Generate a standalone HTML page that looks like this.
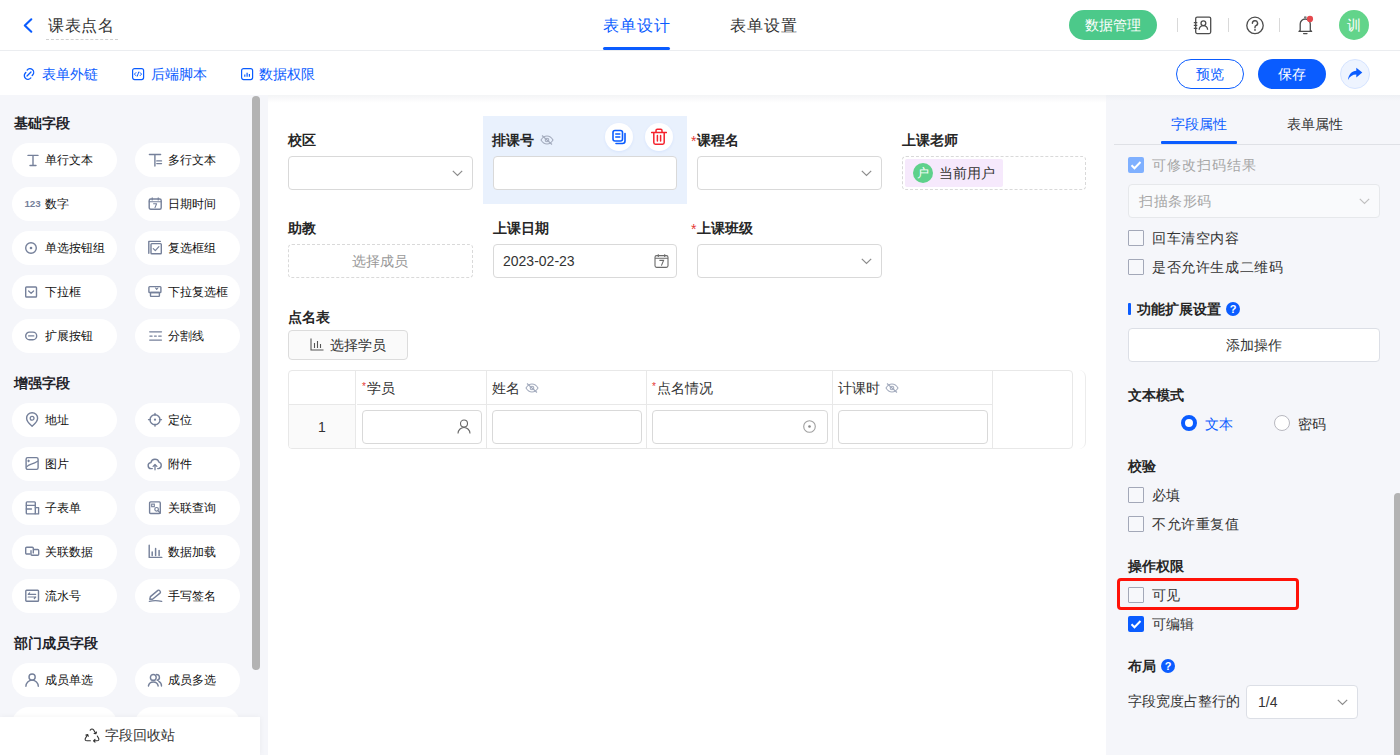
<!DOCTYPE html>
<html><head><meta charset="utf-8">
<style>
*{box-sizing:border-box;margin:0;padding:0}
html,body{width:1400px;height:755px;overflow:hidden;background:#fff;font-family:"Liberation Sans",sans-serif;color:#333;font-size:14px}
.a{position:absolute}
.hdr{left:0;top:0;width:1400px;height:51px;background:#fff;border-bottom:1px solid #ebedf0}
.tb{left:0;top:51px;width:1400px;height:44px;background:#fff}
.left{left:0;top:95px;width:268px;height:660px;background:#f5f6fa}
.main{left:268px;top:95px;width:838px;height:660px;background:#fff}
.right{left:1106px;top:95px;width:294px;height:660px;background:#f5f6fa}
.t{white-space:nowrap;line-height:1}
.sec{font-weight:bold;font-size:14px;color:#1f2329}
.pill{width:105px;height:34px;border-radius:17px;background:#fff}
.pill .ic{position:absolute;left:13px;top:10px;width:14px;height:14px}
.pill .tx{position:absolute;left:33px;top:11px;font-size:12px;color:#111;line-height:1;white-space:nowrap}
.lbl{font-weight:bold;font-size:14px;color:#262626}
.inp{border:1px solid #d9d9d9;border-radius:4px;background:#fff;height:34px}
.req{color:#e53935}
.cb{width:16px;height:16px;border:1px solid #a3a8b8;border-radius:1px;background:#f7f8fb}
.cbt{font-size:14px;color:#333}
</style></head><body>
<!-- header -->
<div class="a hdr"></div>
<svg class="a" style="left:22px;top:17px" width="12" height="17" viewBox="0 0 12 17"><path d="M9.3 2.3 L2.8 8.5 L9.3 14.7" fill="none" stroke="#0a5cff" stroke-width="2.1" stroke-linecap="round" stroke-linejoin="round"/></svg>
<div class="a t" style="left:48px;top:18px;font-size:16px;color:#333;letter-spacing:0.5px">课表点名</div>
<div class="a" style="left:46px;top:39px;width:72px;border-top:1px dashed #d0d0d0"></div>
<div class="a t" style="left:603px;top:18px;font-size:16px;color:#0a5cff;letter-spacing:1px">表单设计</div>
<div class="a" style="left:603px;top:47px;width:67px;height:3px;border-radius:2px;background:#0a5cff"></div>
<div class="a t" style="left:730px;top:18px;font-size:16px;color:#333;letter-spacing:1px">表单设置</div>
<div class="a" style="left:1069px;top:10px;width:88px;height:30px;border-radius:15px;background:#4cc98a"></div>
<div class="a t" style="left:1085px;top:18px;font-size:14px;color:#fff">数据管理</div>
<div class="a" style="left:1177px;top:18px;width:1px;height:14px;background:#d9d9d9"></div>
<div class="a" style="left:1228px;top:18px;width:1px;height:14px;background:#d9d9d9"></div>
<div class="a" style="left:1279px;top:18px;width:1px;height:14px;background:#d9d9d9"></div>
<div class="a" style="left:1339px;top:10px;width:30px;height:30px;border-radius:15px;background:#62d48a"></div>
<div class="a t" style="left:1347px;top:18px;font-size:14px;color:#fff">训</div>
<svg class="a" style="left:1190px;top:12px" width="26" height="26" viewBox="0 0 26 26"><rect x="5.7" y="5.1" width="15" height="16.5" rx="1.5" stroke="#4d4d4d" stroke-width="1.3" fill="none"/><path d="M3.8 10.6h3.5M3.8 13.4h3.5M3.8 16.3h3.5" stroke="#4d4d4d" stroke-width="1.2"/><circle cx="13.4" cy="11.2" r="2.4" stroke="#4d4d4d" stroke-width="1.3" fill="none"/><path d="M9.2 17.8a4.2 4.2 0 0 1 8.4 0" stroke="#4d4d4d" stroke-width="1.3" fill="none"/></svg>
<svg class="a" style="left:1243px;top:13px" width="24" height="24" viewBox="0 0 24 24"><circle cx="12" cy="12.4" r="8.2" stroke="#4d4d4d" stroke-width="1.3" fill="none"/><path d="M9.4 10.3a2.6 2.6 0 1 1 3.6 2.4c-.7.3-1 .8-1 1.5v.6" stroke="#4d4d4d" stroke-width="1.4" fill="none" stroke-linecap="round"/><circle cx="12" cy="16.9" r="0.9" fill="#4d4d4d"/></svg>
<svg class="a" style="left:1293px;top:12px" width="24" height="24" viewBox="0 0 24 24"><path d="M6 19.4h12.6M7.2 19.4V12a5 5 0 0 1 5-5h0.1a5 5 0 0 1 5 5v7.4M6 19.4l1.2-1.2M18.6 19.4l-1.2-1.2M10.6 21.6h3.4M11.6 5.2h1.4" stroke="#4d4d4d" stroke-width="1.3" fill="none" stroke-linecap="round"/><circle cx="17" cy="6.9" r="3.1" fill="#e5484d"/></svg>


<!-- toolbar -->
<div class="a tb"></div>
<div class="a t" style="left:42px;top:67px;font-size:14px;color:#0a5cff">表单外链</div>
<div class="a t" style="left:151px;top:67px;font-size:14px;color:#0a5cff">后端脚本</div>
<div class="a t" style="left:259px;top:67px;font-size:14px;color:#0a5cff">数据权限</div>
<div class="a" style="left:1176px;top:59px;width:68px;height:30px;border-radius:15px;border:1px solid #0a5cff;background:#fff"></div>
<div class="a t" style="left:1196px;top:67px;font-size:14px;color:#0a5cff">预览</div>
<div class="a" style="left:1258px;top:59px;width:68px;height:30px;border-radius:15px;background:#0a5cff"></div>
<div class="a t" style="left:1278px;top:67px;font-size:14px;color:#fff">保存</div>
<div class="a" style="left:1340px;top:59px;width:30px;height:30px;border-radius:15px;border:1px solid #d6e4ff;background:#eef4ff"></div>


<svg class="a" style="left:21.5px;top:67px" width="14" height="14" viewBox="0.6 0.6 12.8 12.8"><path d="M5.3 3.4a3.3 3.3 0 0 1 5.2 4.3l-0.6 0.7M8.7 10.6a3.3 3.3 0 0 1-5.2-4.3l0.6-0.7M5.2 8.8l3.6-3.6" stroke="#0a5cff" stroke-width="1.2" fill="none" stroke-linecap="round"/></svg>
<svg class="a" style="left:131px;top:67px" width="14" height="14" viewBox="0 0 14 14"><rect x="1.6" y="1.6" width="11" height="11" rx="2" stroke="#0a5cff" stroke-width="1.2" fill="none"/><path d="M5.2 5.3L3.4 7.1l1.8 1.8M8.8 5.3l1.8 1.8-1.8 1.8M7.9 4.6L6.1 9.6" stroke="#0a5cff" stroke-width="1" fill="none"/></svg>
<svg class="a" style="left:240px;top:67px" width="14" height="14" viewBox="0 0 14 14"><rect x="1.6" y="1.6" width="11" height="11" rx="2" stroke="#0a5cff" stroke-width="1.2" fill="none"/><path d="M4.8 7.5v2.3M7.1 5.8v4M9.4 7v2.8" stroke="#0a5cff" stroke-width="1.2" fill="none"/></svg>
<svg class="a" style="left:1338px;top:57px" width="34" height="34" viewBox="0 0 34 34"><path d="M10 23C10.5 17.5 14 14 18.3 13.8V10.8L24.3 15.6L18.3 20.5V17.6C14.5 17.6 11.8 19.5 10 23Z" fill="#0a5cff"/></svg>
<!-- panels -->
<div class="a left"></div>
<div class="a t sec" style="left:14px;top:116px">基础字段</div>
<div class="a pill" style="left:12px;top:143px"><svg class="ic" viewBox="0 0 14 14" style="overflow:visible"><path d="M3 2.4h10M8 2.4v10.1M5 12.5h6" stroke="#75809a" stroke-width="1.4" fill="none" stroke-linecap="round" stroke-linejoin="round"/></svg><div class="tx">单行文本</div></div>
<div class="a pill" style="left:135px;top:143px"><svg class="ic" viewBox="0 0 14 14" style="overflow:visible"><path d="M1.4 1.5h11.2M6.9 1.5v11.5M8.8 7.9h4.7M8.8 10.6h4.7" stroke="#75809a" stroke-width="1.4" fill="none" stroke-linecap="round" stroke-linejoin="round"/></svg><div class="tx">多行文本</div></div>
<div class="a pill" style="left:12px;top:187px"><svg class="ic" viewBox="0 0 14 14" style="overflow:visible"><text x="-0.6" y="9.9" font-size="9.8" font-weight="bold" fill="#75809a" style="font-family:'Liberation Sans',sans-serif">123</text></svg><div class="tx">数字</div></div>
<div class="a pill" style="left:135px;top:187px"><svg class="ic" viewBox="0 0 14 14" style="overflow:visible"><rect x="1.2" y="2" width="12" height="10.3" rx="1.5" stroke="#75809a" stroke-width="1.4" fill="none"/><path d="M1.2 4.8h12M4.2 0.9v2M10.2 0.9v2M5.6 6.8h3l-1.6 3.8" stroke="#75809a" stroke-width="1.1" fill="none" stroke-linecap="round" stroke-linejoin="round"/></svg><div class="tx">日期时间</div></div>
<div class="a pill" style="left:12px;top:231px"><svg class="ic" viewBox="0 0 14 14" style="overflow:visible"><circle cx="6" cy="7" r="5.3" stroke="#75809a" stroke-width="1.4" fill="none"/><circle cx="6" cy="7" r="1.3" fill="#75809a"/></svg><div class="tx">单选按钮组</div></div>
<div class="a pill" style="left:135px;top:231px"><svg class="ic" viewBox="0 0 14 14" style="overflow:visible"><path d="M0.8 12.2V0.4h11.5" stroke="#75809a" stroke-width="1.4" fill="none" stroke-linecap="round" stroke-linejoin="round"/><rect x="3" y="2.6" width="10.3" height="10.1" rx="0.8" stroke="#75809a" stroke-width="1.4" fill="none"/><path d="M5.3 7.7l2 2 3.6-4" stroke="#75809a" stroke-width="1.2" fill="none" stroke-linecap="round" stroke-linejoin="round"/></svg><div class="tx">复选框组</div></div>
<div class="a pill" style="left:12px;top:275px"><svg class="ic" viewBox="0 0 14 14" style="overflow:visible"><rect x="0.7" y="2" width="10.8" height="10" rx="0.8" stroke="#75809a" stroke-width="1.4" fill="none"/><path d="M3.6 6l2.5 2.3L8.6 6" stroke="#75809a" stroke-width="1.2" fill="none" stroke-linecap="round" stroke-linejoin="round"/></svg><div class="tx">下拉框</div></div>
<div class="a pill" style="left:135px;top:275px"><svg class="ic" viewBox="0 0 14 14" style="overflow:visible"><rect x="0.9" y="1.6" width="12" height="5.9" rx="0.8" stroke="#75809a" stroke-width="1.4" fill="none"/><rect x="2.5" y="7.5" width="8.9" height="3.9" rx="0.6" stroke="#75809a" stroke-width="1.4" fill="none"/><path d="M7.5 3l1.2 1.3L9.9 3" stroke="#75809a" stroke-width="1.1" fill="none" stroke-linecap="round" stroke-linejoin="round"/></svg><div class="tx">下拉复选框</div></div>
<div class="a pill" style="left:12px;top:319px"><svg class="ic" viewBox="0 0 14 14" style="overflow:visible"><rect x="0.7" y="3.1" width="11" height="7.6" rx="3.8" stroke="#75809a" stroke-width="1.4" fill="none"/><path d="M3.6 6.9h5.2" stroke="#75809a" stroke-width="1.3" fill="none" stroke-linecap="round" stroke-linejoin="round"/></svg><div class="tx">扩展按钮</div></div>
<div class="a pill" style="left:135px;top:319px"><svg class="ic" viewBox="0 0 14 14" style="overflow:visible"><path d="M1.7 2.8h11.8M1.7 11.1h11.8" stroke="#75809a" stroke-width="1.3" fill="none" stroke-linecap="round" stroke-linejoin="round"/><path d="M1.9 7.1h2.2M6.5 7.1h1.8M10.7 7.1h2.5" stroke="#75809a" stroke-width="1.3" fill="none" stroke-linecap="round" stroke-linejoin="round"/></svg><div class="tx">分割线</div></div>
<div class="a t sec" style="left:14px;top:376px">增强字段</div>
<div class="a pill" style="left:12px;top:403px"><svg class="ic" viewBox="0 0 14 14" style="overflow:visible"><path d="M7.1 13.2S12.6 8.6 12.6 5.2A5.5 5.5 0 0 0 1.6 5.2C1.6 8.6 7.1 13.2 7.1 13.2z" stroke="#75809a" stroke-width="1.4" fill="none" stroke-linecap="round" stroke-linejoin="round"/><circle cx="7.1" cy="5.3" r="1.9" stroke="#75809a" stroke-width="1.3" fill="none"/></svg><div class="tx">地址</div></div>
<div class="a pill" style="left:135px;top:403px"><svg class="ic" viewBox="0 0 14 14" style="overflow:visible"><circle cx="7" cy="6.7" r="5" stroke="#75809a" stroke-width="1.4" fill="none"/><circle cx="7" cy="6.7" r="1.1" fill="#75809a"/><path d="M7 0.3v2M7 11.2v2M0.5 6.7h2M11.5 6.7h2" stroke="#75809a" stroke-width="1.3" fill="none" stroke-linecap="round" stroke-linejoin="round"/></svg><div class="tx">定位</div></div>
<div class="a pill" style="left:12px;top:447px"><svg class="ic" viewBox="0 0 14 14" style="overflow:visible"><rect x="1.1" y="0.6" width="12" height="11.8" rx="1.6" stroke="#75809a" stroke-width="1.4" fill="none"/><path d="M1.6 10C4 6.5 7 8 12.6 4.2M3.6 3.1v1.6M2.8 3.9h1.6" stroke="#75809a" stroke-width="1.1" fill="none" stroke-linecap="round" stroke-linejoin="round"/></svg><div class="tx">图片</div></div>
<div class="a pill" style="left:135px;top:447px"><svg class="ic" viewBox="0 0 14 14" style="overflow:visible"><path d="M4.3 11.6H3.4A3 3 0 0 1 2.9 5.6 4.2 4.2 0 0 1 11 5.2a3.3 3.3 0 0 1-0.6 6.4H9.7" stroke="#75809a" stroke-width="1.4" fill="none" stroke-linecap="round" stroke-linejoin="round"/><path d="M7 12.8V7.6M5.1 9.4L7 7.5l1.9 1.9" stroke="#75809a" stroke-width="1.3" fill="none" stroke-linecap="round" stroke-linejoin="round"/></svg><div class="tx">附件</div></div>
<div class="a pill" style="left:12px;top:491px"><svg class="ic" viewBox="0 0 14 14" style="overflow:visible"><rect x="1.3" y="0.9" width="9" height="12" rx="0.8" stroke="#75809a" stroke-width="1.4" fill="none"/><path d="M1.3 4.3h9M1.3 8h5.2M10.3 6.6h3.3v6.3h-3.3" stroke="#75809a" stroke-width="1.3" fill="none" stroke-linecap="round" stroke-linejoin="round"/></svg><div class="tx">子表单</div></div>
<div class="a pill" style="left:135px;top:491px"><svg class="ic" viewBox="0 0 14 14" style="overflow:visible"><rect x="1.6" y="0.9" width="10.7" height="11.6" rx="1" stroke="#75809a" stroke-width="1.4" fill="none"/><rect x="3.7" y="3.1" width="2.6" height="2.6" stroke="#75809a" stroke-width="1.1" fill="none"/><circle cx="8.6" cy="8.3" r="1.8" stroke="#75809a" stroke-width="1.2" fill="none"/><path d="M9.9 9.6l2.4 2.4" stroke="#75809a" stroke-width="1.3" fill="none" stroke-linecap="round" stroke-linejoin="round"/></svg><div class="tx">关联查询</div></div>
<div class="a pill" style="left:12px;top:535px"><svg class="ic" viewBox="0 0 14 14" style="overflow:visible"><path d="M5 9H1.7a1 1 0 0 1-1-1V3.3a1 1 0 0 1 1-1h5.6a1 1 0 0 1 1 1v4.6" stroke="#75809a" stroke-width="1.4" fill="none" stroke-linecap="round" stroke-linejoin="round"/><path d="M9 4.5h3.7a1 1 0 0 1 1 1v3.8a1 1 0 0 1-1 1H7a1 1 0 0 1-1-1V5.6" stroke="#75809a" stroke-width="1.4" fill="none" stroke-linecap="round" stroke-linejoin="round"/></svg><div class="tx">关联数据</div></div>
<div class="a pill" style="left:135px;top:535px"><svg class="ic" viewBox="0 0 14 14" style="overflow:visible"><path d="M1.2 0.3v12.1h12.6" stroke="#75809a" stroke-width="1.4" fill="none" stroke-linecap="round" stroke-linejoin="round"/><path d="M4.2 7v3.6M7.6 3.5v7.1M11.1 5.5v5.1" stroke="#75809a" stroke-width="1.5" fill="none" stroke-linecap="round" stroke-linejoin="round"/></svg><div class="tx">数据加载</div></div>
<div class="a pill" style="left:12px;top:579px"><svg class="ic" viewBox="0 0 14 14" style="overflow:visible"><rect x="0.8" y="1.3" width="12.7" height="10.9" rx="0.8" stroke="#75809a" stroke-width="1.4" fill="none"/><path d="M3.2 5.3h7.5M3.2 8h7.5M4.6 3.8L3.2 5.3M9.3 9.5L10.7 8" stroke="#75809a" stroke-width="1.2" fill="none" stroke-linecap="round" stroke-linejoin="round"/></svg><div class="tx">流水号</div></div>
<div class="a pill" style="left:135px;top:579px"><svg class="ic" viewBox="0 0 14 14" style="overflow:visible"><path d="M1.8 10.2l0.6-2.6 7.5-6.2a1.2 1.2 0 0 1 1.7 0.2l0.6 0.8a1.2 1.2 0 0 1-0.2 1.7L4.5 10.3z" stroke="#75809a" stroke-width="1.4" fill="none" stroke-linecap="round" stroke-linejoin="round"/><path d="M1.3 12.4c4-1.1 8-1.1 12.4 0" stroke="#75809a" stroke-width="1.3" fill="none" stroke-linecap="round" stroke-linejoin="round"/></svg><div class="tx">手写签名</div></div>
<div class="a t sec" style="left:14px;top:636px">部门成员字段</div>
<div class="a pill" style="left:12px;top:663px"><svg class="ic" viewBox="0 0 14 14" style="overflow:visible"><circle cx="7.1" cy="4.1" r="3.1" stroke="#75809a" stroke-width="1.4" fill="none"/><path d="M0.9 13.3a6.2 6.2 0 0 1 12.4 0" stroke="#75809a" stroke-width="1.4" fill="none" stroke-linecap="round" stroke-linejoin="round"/></svg><div class="tx">成员单选</div></div>
<div class="a pill" style="left:135px;top:663px"><svg class="ic" viewBox="0 0 14 14" style="overflow:visible"><circle cx="5.3" cy="4.4" r="2.9" stroke="#75809a" stroke-width="1.4" fill="none"/><path d="M0.4 13a5 5 0 0 1 9.8 0M8.5 1.5a2.9 2.9 0 0 1 0.8 5.7M10.8 8.3a5 5 0 0 1 2.7 4.7" stroke="#75809a" stroke-width="1.4" fill="none" stroke-linecap="round" stroke-linejoin="round"/></svg><div class="tx">成员多选</div></div>
<div class="a pill" style="left:12px;top:707px"></div>
<div class="a pill" style="left:135px;top:707px"></div>
<div class="a" style="left:252px;top:96px;width:8px;height:574px;border-radius:4px;background:#b3b3b3"></div>
<div class="a" style="left:0;top:717px;width:260px;height:38px;background:#fff;box-shadow:0 0 6px rgba(0,0,0,0.05)"></div>
<svg class="a" style="left:84px;top:727px" width="16" height="16" viewBox="0 0 16 16"><path d="M6.2 3.2Q8 0.9 9.8 3.2L11.8 6.6M10.1 6.5L11.9 6.8L12.5 5M13.3 9L14.7 11.5Q15.4 13.8 12.9 13.8H9.6M11 12.4L9.5 13.8L11 15.2M6.4 13.8H3.1Q0.6 13.8 1.3 11.5L3.6 7.6M1.9 8.1L3.7 7.5L4.3 9.3" stroke="#333" stroke-width="1.1" fill="none" stroke-linecap="round" stroke-linejoin="round"/></svg>
<div class="a t" style="left:105px;top:728px;font-size:14px;color:#333">字段回收站</div>

<div class="a main"></div>

<div class="a" style="left:268px;top:95px;width:838px;height:8px;background:linear-gradient(#f3f4f6,#fff)"></div>
<!-- row 1 -->
<div class="a t lbl" style="left:288px;top:133px">校区</div>
<div class="a inp" style="left:288px;top:156px;width:185px"></div>
<svg class="a" style="left:452px;top:170px" width="11" height="7" viewBox="0 0 11 7"><path d="M0.8 0.8l4.7 4.7 4.7-4.7" stroke="#8c8c8c" stroke-width="1.2" fill="none"/></svg>
<div class="a" style="left:483px;top:116px;width:204px;height:88px;background:#e9f1fd"></div>
<div class="a t lbl" style="left:492px;top:133px">排课号</div>
<svg class="a" style="left:540px;top:135px" width="14" height="10" viewBox="0 0 14 10"><path d="M1 5C2.8 2 4.8 1 7 1s4.2 1 6 4c-1.8 3-3.8 4-6 4S2.8 8 1 5z" stroke="#a3abbd" stroke-width="1.1" fill="none"/><circle cx="7" cy="5" r="1.8" stroke="#a3abbd" stroke-width="1.1" fill="none"/><path d="M2 0.5l10 9" stroke="#a3abbd" stroke-width="1.1"/></svg>
<div class="a" style="left:605px;top:123px;width:28px;height:28px;border-radius:14px;background:#fff;box-shadow:0 1px 3px rgba(10,92,255,0.08)"></div>
<svg class="a" style="left:611px;top:129px" width="16" height="16" viewBox="0 0 16 16"><rect x="2" y="1.5" width="9.5" height="10.5" rx="2" stroke="#0a5cff" stroke-width="1.6" fill="none"/><path d="M4.8 5h4M4.8 8h4M14 4.5v7.5a2.5 2.5 0 0 1-2.5 2.5H5" stroke="#0a5cff" stroke-width="1.6" fill="none" stroke-linecap="round"/></svg>
<div class="a" style="left:645px;top:123px;width:28px;height:28px;border-radius:14px;background:#fff;box-shadow:0 1px 3px rgba(10,92,255,0.08)"></div>
<svg class="a" style="left:651px;top:128px" width="16" height="17" viewBox="0 0 16 17"><path d="M0.6 4.4h14.8M5 4.4V2.6a1.3 1.3 0 0 1 1.3-1.3h3.4A1.3 1.3 0 0 1 11 2.6v1.8M2.8 4.6v10a1.6 1.6 0 0 0 1.6 1.6h7.2a1.6 1.6 0 0 0 1.6-1.6v-10M6.4 7.6v5.4M9.6 7.6v5.4" stroke="#f5222d" stroke-width="1.5" fill="none" stroke-linejoin="round" stroke-linecap="round"/></svg>
<div class="a inp" style="left:493px;top:156px;width:184px"></div>
<div class="a t req" style="left:691px;top:134px;font-size:14px">*</div><div class="a t lbl" style="left:697px;top:133px">课程名</div>
<div class="a inp" style="left:697px;top:156px;width:185px"></div>
<svg class="a" style="left:861px;top:170px" width="11" height="7" viewBox="0 0 11 7"><path d="M0.8 0.8l4.7 4.7 4.7-4.7" stroke="#8c8c8c" stroke-width="1.2" fill="none"/></svg>
<div class="a t lbl" style="left:902px;top:133px">上课老师</div>
<div class="a" style="left:902px;top:156px;width:184px;height:34px;border:1px dashed #d9d9d9;border-radius:4px"></div>
<div class="a" style="left:905px;top:159px;width:98px;height:28px;border-radius:2px;background:#f6e9fc"></div>
<div class="a" style="left:913px;top:163px;width:20px;height:20px;border-radius:10px;background:#5ed18b"></div>
<div class="a t" style="left:917px;top:167px;font-size:12px;color:#fff">户</div>
<div class="a t" style="left:939px;top:166px;font-size:14px;color:#333">当前用户</div>
<!-- row 2 -->
<div class="a t lbl" style="left:288px;top:221px">助教</div>
<div class="a" style="left:288px;top:244px;width:185px;height:34px;border:1px dashed #d9d9d9;border-radius:4px"></div>
<div class="a t" style="left:352px;top:254px;font-size:14px;color:#999">选择成员</div>
<div class="a t lbl" style="left:493px;top:221px">上课日期</div>
<div class="a inp" style="left:493px;top:244px;width:184px"></div>
<div class="a t" style="left:503px;top:254px;font-size:14px;color:#333">2023-02-23</div>
<svg class="a" style="left:654px;top:254px" width="15" height="14" viewBox="0 0 15 14"><rect x="1" y="1.6" width="13" height="11.8" rx="1.6" stroke="#6b6b6b" stroke-width="1.1" fill="none"/><path d="M1 4.3h13M4.3 0.3v2.6M10.7 0.3v2.6M5.4 6.4h4.2L7.4 11.6" stroke="#6b6b6b" stroke-width="1.1" fill="none"/></svg>
<div class="a t req" style="left:691px;top:222px;font-size:14px">*</div><div class="a t lbl" style="left:697px;top:221px">上课班级</div>
<div class="a inp" style="left:697px;top:244px;width:185px"></div>
<svg class="a" style="left:861px;top:258px" width="11" height="7" viewBox="0 0 11 7"><path d="M0.8 0.8l4.7 4.7 4.7-4.7" stroke="#8c8c8c" stroke-width="1.2" fill="none"/></svg>
<!-- subform -->
<div class="a t lbl" style="left:288px;top:310px">点名表</div>
<div class="a" style="left:288px;top:330px;width:120px;height:30px;border:1px solid #dcdcdc;border-radius:4px;background:#fafafa"></div>
<svg class="a" style="left:310px;top:338px" width="14" height="13" viewBox="0 0 14 13"><path d="M1 0.5v11.5h12.5M4.5 5v5M7.5 3v7M10.5 6v4" stroke="#555" stroke-width="1.1" fill="none"/></svg>
<div class="a t" style="left:330px;top:338px;font-size:14px;color:#333">选择学员</div>
<!-- table -->
<div class="a" style="left:1070px;top:370px;width:16px;height:79px;border-right:1px solid #ececec;border-radius:0 7px 7px 0"></div>
<div class="a" style="left:288px;top:370px;width:785px;height:79px;border:1px solid #e8e8e8;border-radius:4px;background:#fff"></div>
<div class="a" style="left:289px;top:405px;width:66px;height:43px;background:#fafafa;border-radius:0 0 0 3px"></div>
<div class="a" style="left:355px;top:371px;width:1px;height:77px;background:#e8e8e8"></div>
<div class="a" style="left:289px;top:404px;width:66px;height:1px;background:#e8e8e8"></div>
<div class="a" style="left:357px;top:404px;width:635px;height:1px;background:#e8e8e8"></div>
<div class="a" style="left:486px;top:371px;width:1px;height:77px;background:#e8e8e8"></div>
<div class="a" style="left:646px;top:371px;width:1px;height:77px;background:#e8e8e8"></div>
<div class="a" style="left:832px;top:371px;width:1px;height:77px;background:#e8e8e8"></div>
<div class="a" style="left:992px;top:371px;width:1px;height:77px;background:#e8e8e8"></div>
<div class="a t" style="left:362px;top:381px;font-size:14px;color:#333"><span class="req" style="font-size:10px;vertical-align:3px;margin-right:1px">*</span>学员</div>
<div class="a t" style="left:492px;top:381px;font-size:14px;color:#333">姓名</div>
<svg class="a" style="left:525px;top:383px" width="14" height="10" viewBox="0 0 14 10"><path d="M1 5C2.8 2 4.8 1 7 1s4.2 1 6 4c-1.8 3-3.8 4-6 4S2.8 8 1 5z" stroke="#a3abbd" stroke-width="1.1" fill="none"/><circle cx="7" cy="5" r="1.8" stroke="#a3abbd" stroke-width="1.1" fill="none"/><path d="M2 0.5l10 9" stroke="#a3abbd" stroke-width="1.1"/></svg>
<div class="a t" style="left:652px;top:381px;font-size:14px;color:#333"><span class="req" style="font-size:10px;vertical-align:3px;margin-right:1px">*</span>点名情况</div>
<div class="a t" style="left:838px;top:381px;font-size:14px;color:#333">计课时</div>
<svg class="a" style="left:885px;top:383px" width="14" height="10" viewBox="0 0 14 10"><path d="M1 5C2.8 2 4.8 1 7 1s4.2 1 6 4c-1.8 3-3.8 4-6 4S2.8 8 1 5z" stroke="#a3abbd" stroke-width="1.1" fill="none"/><circle cx="7" cy="5" r="1.8" stroke="#a3abbd" stroke-width="1.1" fill="none"/><path d="M2 0.5l10 9" stroke="#a3abbd" stroke-width="1.1"/></svg>
<div class="a t" style="left:318px;top:420px;font-size:14px;color:#333">1</div>
<div class="a inp" style="left:362px;top:410px;width:120px"></div>
<svg class="a" style="left:457px;top:419px" width="14" height="15" viewBox="0 0 14 15"><circle cx="7" cy="4.5" r="3.5" stroke="#666" stroke-width="1.1" fill="none"/><path d="M1 14.5a6 6 0 0 1 12 0" stroke="#666" stroke-width="1.1" fill="none"/></svg>
<div class="a inp" style="left:492px;top:410px;width:150px"></div>
<div class="a inp" style="left:652px;top:410px;width:176px"></div>
<svg class="a" style="left:803px;top:420px" width="13" height="13" viewBox="0 0 13 13"><circle cx="6.5" cy="6.5" r="5.8" stroke="#a0a0a0" stroke-width="1.1" fill="none"/><circle cx="6.5" cy="6.5" r="1.3" fill="#888"/></svg>
<div class="a inp" style="left:838px;top:410px;width:150px"></div>

<div class="a right"></div>

<div class="a" style="left:1106px;top:95px;width:294px;height:6px;background:linear-gradient(#eef0f4,#f5f6fa)"></div>
<div class="a t" style="left:1171px;top:117px;font-size:14px;color:#0a5cff">字段属性</div>
<div class="a t" style="left:1287px;top:117px;font-size:14px;color:#333">表单属性</div>
<div class="a" style="left:1114px;top:144px;width:286px;height:1px;background:#dfe1e6"></div>
<div class="a" style="left:1161px;top:141px;width:76px;height:3px;border-radius:1px;background:#0a5cff"></div>
<div class="a" style="left:1128px;top:157px;width:16px;height:16px;border-radius:2px;background:#7fb0ff"></div><svg class="a" style="left:1128px;top:157px" width="16" height="16" viewBox="0 0 16 16"><path d="M3.5 8.2l3 3 6-6.2" stroke="#fff" stroke-width="2" fill="none"/></svg>
<div class="a t" style="left:1152px;top:158px;font-size:14px;color:#a6a6a6;letter-spacing:1px">可修改扫码结果</div>
<div class="a" style="left:1128px;top:184px;width:252px;height:34px;border:1px solid #e6e8eb;border-radius:4px;background:#f9fafc"></div>
<div class="a t" style="left:1139px;top:194px;font-size:14px;color:#a6a6a6;letter-spacing:0.5px">扫描条形码</div>
<svg class="a" style="left:1359px;top:198px" width="11" height="7" viewBox="0 0 11 7"><path d="M0.8 0.8l4.7 4.7 4.7-4.7" stroke="#c0c0c0" stroke-width="1.2" fill="none"/></svg>
<div class="a cb" style="left:1128px;top:230px"></div>
<div class="a t" style="left:1152px;top:231px;font-size:14px;color:#333;letter-spacing:0.6px">回车清空内容</div>
<div class="a cb" style="left:1128px;top:259px"></div>
<div class="a t" style="left:1152px;top:260px;font-size:14px;color:#333;letter-spacing:0.6px">是否允许生成二维码</div>
<div class="a" style="left:1128px;top:303px;width:3px;height:12px;background:#0a5cff;border-radius:1px"></div>
<div class="a t lbl" style="left:1137px;top:302px">功能扩展设置</div>
<div class="a" style="left:1226px;top:302px;width:14px;height:14px;border-radius:7px;background:#0a5cff"></div><div class="a t" style="left:1229px;top:304px;width:8px;text-align:center;font-size:11px;font-weight:bold;color:#fff">?</div>
<div class="a" style="left:1128px;top:328px;width:252px;height:34px;border:1px solid #dcdfe6;border-radius:4px;background:#fff"></div>
<div class="a t" style="left:1226px;top:338px;font-size:14px;color:#333">添加操作</div>
<div class="a t lbl" style="left:1128px;top:388px">文本模式</div>
<div class="a" style="left:1181px;top:415px;width:16px;height:16px;border-radius:8px;border:4.5px solid #0a5cff;background:#fff"></div>
<div class="a t" style="left:1205px;top:417px;font-size:14px;color:#0a5cff">文本</div>
<div class="a" style="left:1274px;top:415px;width:16px;height:16px;border-radius:8px;border:1px solid #b8b8c0;background:#fff"></div>
<div class="a t" style="left:1298px;top:417px;font-size:14px;color:#333">密码</div>
<div class="a t lbl" style="left:1128px;top:459px">校验</div>
<div class="a cb" style="left:1128px;top:487px"></div>
<div class="a t" style="left:1152px;top:488px;font-size:14px;color:#333">必填</div>
<div class="a cb" style="left:1128px;top:516px"></div>
<div class="a t" style="left:1152px;top:517px;font-size:14px;color:#333;letter-spacing:0.6px">不允许重复值</div>
<div class="a t lbl" style="left:1128px;top:559px">操作权限</div>
<div class="a" style="left:1117px;top:578px;width:182px;height:32px;border:3px solid #ff1208;border-radius:4px"></div>
<div class="a cb" style="left:1128px;top:587px"></div>
<div class="a t" style="left:1152px;top:588px;font-size:14px;color:#333">可见</div>
<div class="a" style="left:1128px;top:616px;width:16px;height:16px;border-radius:2px;background:#0a5cff"></div><svg class="a" style="left:1128px;top:616px" width="16" height="16" viewBox="0 0 16 16"><path d="M3.5 8.2l3 3 6-6.2" stroke="#fff" stroke-width="2" fill="none"/></svg>
<div class="a t" style="left:1152px;top:617px;font-size:14px;color:#333">可编辑</div>
<div class="a t lbl" style="left:1128px;top:659px">布局</div>
<div class="a" style="left:1161px;top:659px;width:14px;height:14px;border-radius:7px;background:#0a5cff"></div><div class="a t" style="left:1164px;top:661px;width:8px;text-align:center;font-size:11px;font-weight:bold;color:#fff">?</div>
<div class="a t" style="left:1128px;top:694px;font-size:14px;color:#333">字段宽度占整行的</div>
<div class="a" style="left:1246px;top:685px;width:112px;height:34px;border:1px solid #dcdfe6;border-radius:4px;background:#fff"></div>
<div class="a t" style="left:1258px;top:695px;font-size:14px;color:#333">1/4</div>
<svg class="a" style="left:1337px;top:699px" width="11" height="7" viewBox="0 0 11 7"><path d="M0.8 0.8l4.7 4.7 4.7-4.7" stroke="#8c8c8c" stroke-width="1.2" fill="none"/></svg>
<div class="a" style="left:1394px;top:493px;width:8px;height:280px;border-radius:4px;background:#b3b3b3"></div>


</body></html>
